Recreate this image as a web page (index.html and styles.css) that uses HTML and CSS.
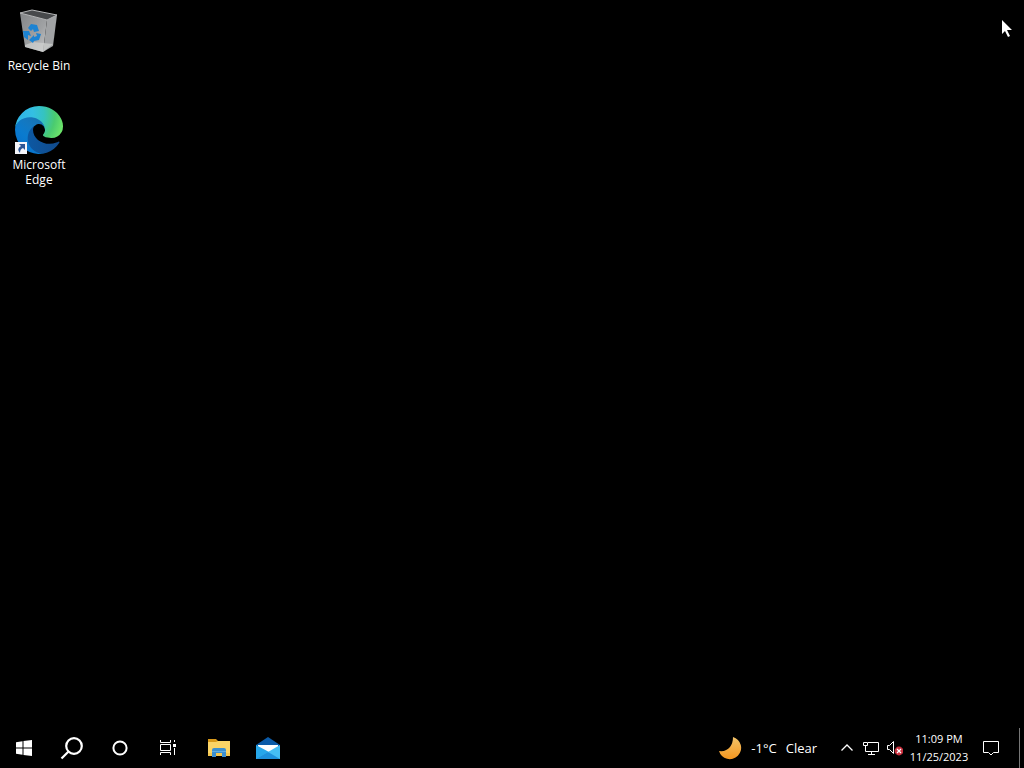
FILE: index.html
```html
<!DOCTYPE html>
<html lang="en">
<head>
    <meta charset="UTF-8">
    <meta name="viewport" content="width=device-width, initial-scale=1.0">
    <title>Desktop</title>
    <link rel="stylesheet" href="styles.css">
</head>
<body>
    <main class="desktop">
        <a href="#recycle" class="shortcut">
            <svg class="shortcut-icon" viewBox="0 0 48 48" aria-hidden="true">
                <defs>
                    <linearGradient id="binFront" x1="0" y1="0" x2="1" y2="1">
                        <stop offset="0" stop-color="#838587"/>
                        <stop offset="0.6" stop-color="#a0a2a4"/>
                        <stop offset="1" stop-color="#c9cacb"/>
                    </linearGradient>
                </defs>
                <path d="M5 6 L17 3 L42 8 L32 13 Z" fill="#47494b"/>
                <path d="M5 6 L32 13 L28 45 L10 40 Z" fill="url(#binFront)"/>
                <path d="M32 13 L42 8 L38 39 L28 45 Z" fill="#a1a3a5"/>
                <path d="M10 38 L18 35 L38 37 L28 45 L10 40 Z" fill="#d0d1d0" opacity="0.7"/>
                <path d="M5 6 L17 3 L42 8 L32 13 Z" fill="none" stroke="#b4b5b6" stroke-width="1" stroke-linejoin="round"/>
                <g fill="#1c83d2">
                    <path d="M13 21 L16 17 L22 18 L24 24 L19 25 L18 22 L16 24 Z"/>
                    <path d="M8 24 L14 24 L16 29 L13 28 L13 33 L9 30 Z"/>
                    <path d="M14 33 L19 28 L19 30 L22 29 L21 26 L26 27 L24 33 L19 34 L18 36 Z"/>
                </g>
            </svg>
            <span>Recycle Bin</span>
        </a>
        <a href="#edge" class="shortcut">
            <span class="icon-wrap">
                <svg class="shortcut-icon" viewBox="0 0 256 256" aria-hidden="true">
                    <defs>
                        <linearGradient id="edgeDark" gradientUnits="userSpaceOnUse" x1="63" y1="178" x2="241" y2="178">
                            <stop offset="0" stop-color="#0c59a4"/>
                            <stop offset="1" stop-color="#114a8b"/>
                        </linearGradient>
                        <linearGradient id="edgeBlue" gradientUnits="userSpaceOnUse" x1="157" y1="104" x2="46" y2="226">
                            <stop offset="0" stop-color="#1672b4"/>
                            <stop offset="0.3" stop-color="#1478c0"/>
                            <stop offset="0.67" stop-color="#0a7bcf"/>
                            <stop offset="1" stop-color="#0873cc"/>
                        </linearGradient>
                        <radialGradient id="edgeGreen" gradientUnits="userSpaceOnUse" cx="30" cy="50" r="235">
                            <stop offset="0" stop-color="#2fb4e6"/>
                            <stop offset="0.3" stop-color="#34bfe3"/>
                            <stop offset="0.55" stop-color="#35c3c0"/>
                            <stop offset="0.8" stop-color="#4acb70"/>
                            <stop offset="1" stop-color="#6be36a"/>
                        </radialGradient>
                    </defs>
                    <g transform="translate(-4.63 -4.92)">
                        <path fill="url(#edgeDark)" d="M235.68,195.46a93.73,93.73,0,0,1-10.54,4.71,101.87,101.87,0,0,1-35.9,6.46c-47.32,0-88.54-32.55-88.54-74.32A31.48,31.48,0,0,1,117.13,105c-42.8,1.8-53.8,46.4-53.8,72.53,0,73.88,68.09,81.37,82.76,81.37,7.91,0,19.84-2.3,27-4.56l1.31-.44A128.34,128.34,0,0,0,241,201.1,4,4,0,0,0,235.68,195.46Z"/>
                        <path fill="url(#edgeBlue)" d="M110.34,246.34A79.2,79.2,0,0,1,87.6,225,80.72,80.72,0,0,1,117.13,105c3.12-1.47,8.45-4.13,15.54-4a32.35,32.35,0,0,1,25.69,13,31.88,31.88,0,0,1,6.36,18.66c0-.21,24.46-79.6-80-79.6-43.9,0-80,41.66-80,78.21A130.15,130.15,0,0,0,17,187.05,128,128,0,0,0,173.4,254.3,75.59,75.59,0,0,1,110.34,246.34Z"/>
                        <path fill="url(#edgeGreen)" d="M156.94,153.78c-.81,1.05-3.3,2.5-3.3,5.66,0,2.61,1.7,5.12,4.72,7.23,14.38,10,41.49,8.68,41.56,8.68A59.56,59.56,0,0,0,230.19,167,61.38,61.38,0,0,0,260.63,114c.26-22.41-8-37.31-11.34-43.91C228.09,28.76,182.35,5,132.63,5A128,128,0,0,0,4.64,131.2c.48-36.54,36.8-66,80-66,3.5,0,23.46.34,42,10.07,16.34,8.58,24.9,18.94,30.85,29.21,6.18,10.67,7.28,24.15,7.28,29.52S161.9,147.33,156.94,153.78Z"/>
                    </g>
                </svg>
                <svg class="shortcut-arrow" viewBox="0 0 12 12" aria-hidden="true">
                    <rect width="12" height="12" fill="#f4f5fa"/>
                    <path d="M4 2 H10 V8 L8 6 Q5 7 5 11 Q1 7 6 4 Z" fill="#2c5695"/>
                </svg>
            </span>
            <span>Microsoft Edge</span>
        </a>
    </main>

    <!-- Mouse pointer -->
    <svg class="cursor" viewBox="0 0 12 19" aria-hidden="true">
        <path d="M1 1 V15 L4 12 L7 18 L9 17 L6 11 H11 Z" fill="#fff"/>
    </svg>

    <footer class="taskbar">
        <nav class="apps">
            <button class="task" aria-label="Start">
                <svg width="16" height="16" viewBox="0 0 16 16" fill="#fff">
                    <path d="M0 2.3 L6.5 1.3 V7.5 H0 Z M7.5 1.1 L16 0 V7.5 H7.5 Z M0 8.5 H6.5 V14.7 L0 13.7 Z M7.5 8.5 H16 V16 L7.5 14.9 Z"/>
                </svg>
            </button>
            <button class="task" aria-label="Search">
                <svg width="24" height="24" viewBox="0 0 24 24" fill="none" stroke="#fff" stroke-width="2.2">
                    <circle cx="14" cy="10" r="7.8"/>
                    <path d="M8.3 15.7 L1.5 22.5"/>
                </svg>
            </button>
            <button class="task" aria-label="Cortana">
                <svg width="16" height="16" viewBox="0 0 16 16" fill="none" stroke="#fff" stroke-width="2">
                    <circle cx="8" cy="8" r="6.6"/>
                </svg>
            </button>
            <button class="task" aria-label="Task View">
                <svg width="16" height="16" viewBox="0 0 16 16" fill="none" stroke="#fff">
                    <path d="M.5 0 V2.5 H10.5 V0 M.5 15 V12.5 H10.5 V15 M.5 4.5 H10.5 V10.5 H.5 Z M14.5 0 V2 M14.5 8 V15"/>
                    <path d="M13 4 H16 V7 H13 Z" fill="#fff" stroke="none"/>
                </svg>
            </button>
            <button class="task pinned" aria-label="File Explorer">
                <svg width="24" height="20" viewBox="0 0 24 20">
                    <path d="M1 1 H9 L11 3 H23 V6 H1 Z" fill="#d99a1b"/>
                    <path d="M1 4 H9 L11 3 H23 V18 H1 Z" fill="#fbd466"/>
                    <path d="M1 15 H23 V18 H1 Z" fill="#f4c64f"/>
                    <path d="M5 19 V12 Q5 10 7 10 H17 Q19 10 19 12 V19 H15 V15 H9 V19 Z" fill="#3c8fcf"/>
                    <path d="M5 13 H19 V14 H5 Z" fill="#5eaee3"/>
                </svg>
            </button>
            <button class="task" aria-label="Mail">
                <svg width="24" height="24" viewBox="0 0 24 24">
                    <path d="M0 9 L12 1 L24 9 V14 H0 Z" fill="#0b5ba8"/>
                    <path d="M2 9 H22 V16 H2 Z" fill="#fff"/>
                    <path d="M0 9 L13 16 L24 23 H0 Z" fill="#27a7ea"/>
                    <path d="M24 9 L12 16 L0 23 H24 Z" fill="#45bef3"/>
                    <path d="M0 23 L12 16 L24 23 Z" fill="#1e91dc"/>
                </svg>
            </button>
        </nav>
        <div class="tray">
            <button class="weather">
                <svg width="24" height="24" viewBox="0 0 24 24" aria-hidden="true">
                    <defs>
                        <linearGradient id="moon" x1="0" y1="0" x2="0" y2="1">
                            <stop offset="0" stop-color="#f3c46a"/>
                            <stop offset="1" stop-color="#f4961f"/>
                        </linearGradient>
                    </defs>
                    <path d="M15 1 A11.3 11.3 0 1 1 1 15 Q8 16 12 11 Q15 7 15 1 Z" fill="url(#moon)"/>
                </svg>
                <span>-1°C</span>
                <span>Clear</span>
            </button>
            <button class="tray-icon" aria-label="Show hidden icons">
                <svg width="12" height="8" viewBox="0 0 12 8" fill="none" stroke="#fff" stroke-width="1.3">
                    <path d="M.5 6.5 L6 1 L11.5 6.5"/>
                </svg>
            </button>
            <button class="tray-icon" aria-label="Network">
                <svg width="16" height="14" viewBox="0 0 16 14" fill="none" stroke="#fff">
                    <path d="M5 1.5 H15.5 V10.5 H2.5 V5 M.5 1.5 H4.5 V4.5 H.5 Z M8.5 10.5 V13 M5 13.5 H12"/>
                </svg>
            </button>
            <button class="tray-icon" aria-label="Volume muted">
                <svg width="16" height="16" viewBox="0 0 16 16">
                    <path d="M.5 5.5 H2.5 L6.5 1.5 V13.5 L2.5 9.5 H.5 Z" fill="none" stroke="#fff"/>
                    <circle cx="12" cy="11" r="4.4" fill="#c9303e"/>
                    <path d="M10 9 L14 13 M14 9 L10 13" stroke="#fff" stroke-width="1.2"/>
                </svg>
            </button>
            <button class="clock">
                <span>11:09 PM</span>
                <span>11/25/2023</span>
            </button>
            <button class="notifications" aria-label="Notifications">
                <svg width="16" height="16" viewBox="0 0 16 16" fill="none" stroke="#fff">
                    <path d="M.5 1.5 H15.5 V12.5 H10.5 L8 15 L5.5 12.5 H.5 Z"/>
                </svg>
            </button>
            <button class="show-desktop" aria-label="Show desktop"></button>
        </div>
    </footer>
</body>
</html>
```
FILE: styles.css
```css
* {
    box-sizing: border-box;
}
body {
    display: flex;
    flex-direction: column;
    min-height: 100vh;
    margin: 0;
    font-family: "Open Sans", "Noto Sans", sans-serif;
    font-size: 12px;
    background: #000;
    color: #fff;
}
button {
    padding: 0;
    border: none;
    background: none;
    color: inherit;
    font: inherit;
}
svg {
    display: block;
    flex: none;
}

/* Desktop icons */
.desktop {
    flex: 1;
    display: flex;
    flex-direction: column;
    align-items: flex-start;
    gap: 33px;
    padding: 7px 1px;
}
.shortcut {
    display: flex;
    flex-direction: column;
    align-items: center;
    gap: 3px;
    width: 76px;
    padding: 0 4px;
    color: #fff;
    line-height: 15px;
    text-align: center;
    text-decoration: none;
}
.icon-wrap {
    position: relative;
}
.shortcut-icon {
    width: 48px;
    height: 48px;
}
.shortcut-arrow {
    position: absolute;
    left: 0;
    bottom: 0;
    width: 12px;
    height: 12px;
}
.cursor {
    position: absolute;
    top: 19px;
    right: 11px;
    width: 12px;
    height: 19px;
}

/* Taskbar */
.taskbar {
    display: flex;
    justify-content: space-between;
    height: 40px;
}
.apps,
.tray {
    display: flex;
}
.task {
    display: flex;
    align-items: center;
    justify-content: center;
    width: 48px;
}
.pinned {
    margin: 0 1px 0 3px;
}
.weather {
    display: flex;
    align-items: center;
    gap: 9px;
    margin-right: 18px;
    font-size: 13px;
}
.tray-icon {
    display: flex;
    align-items: center;
    justify-content: center;
    width: 24px;
}
.clock {
    display: flex;
    flex-direction: column;
    align-items: center;
    justify-content: center;
    width: 64px;
    font-size: 11px;
    line-height: 18px;
}
.notifications {
    display: flex;
    align-items: center;
    justify-content: center;
    width: 32px;
    margin: 0 12px 0 4px;
}
.show-desktop {
    width: 5px;
    border-left: 1px solid #777;
}
```
